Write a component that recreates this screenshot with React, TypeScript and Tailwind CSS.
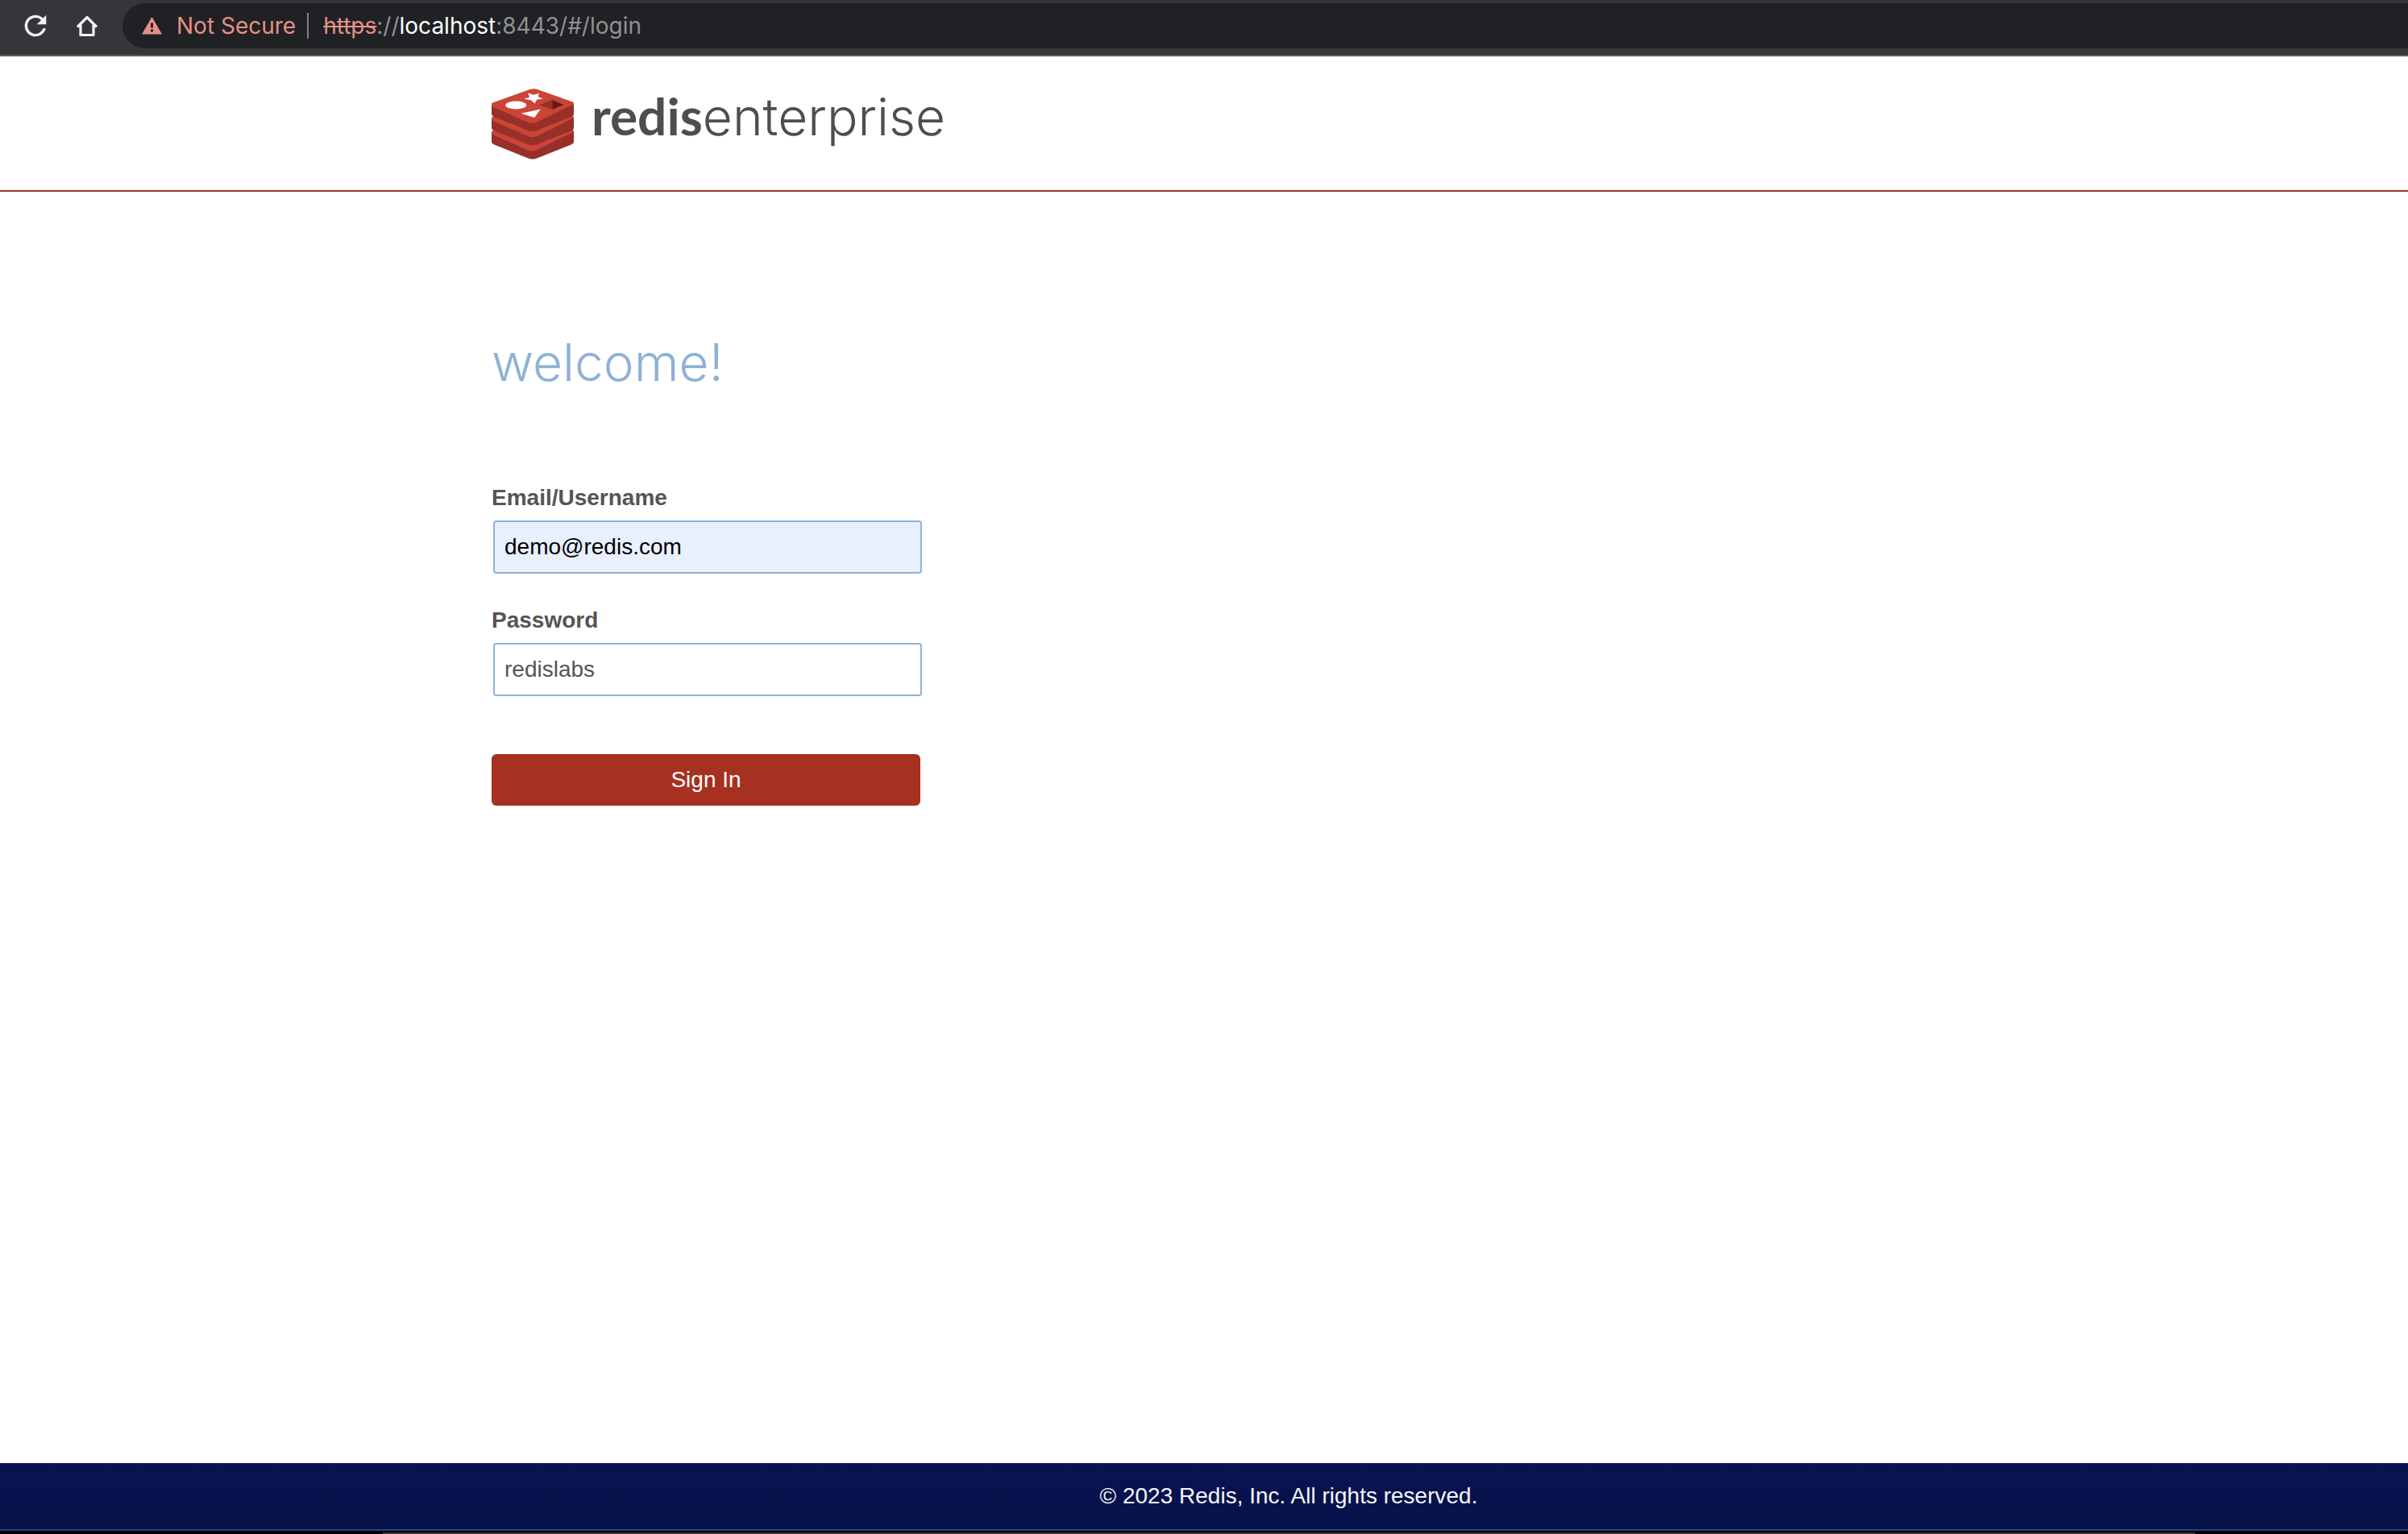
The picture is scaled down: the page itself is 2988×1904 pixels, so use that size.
import React from 'react';

function ReloadIcon() {
  return (
    <svg viewBox="0 0 24 24" className="size-10" fill="#f1f3f4" aria-hidden="true">
      <path d="M17.65 6.35A7.96 7.96 0 0 0 12 4a8 8 0 1 0 7.73 10h-2.08A6 6 0 1 1 12 6c1.66 0 3.14.69 4.22 1.78L13 11h7V4l-2.35 2.35z" />
    </svg>
  );
}

function HomeIcon() {
  return (
    <svg viewBox="0 0 40 40" className="size-10" aria-hidden="true">
      <path
        d="M8 21.500 20 9.500l12 12M12 19v12.500h16V19"
        fill="none"
        stroke="#f1f3f4"
        strokeWidth="3.200"
        strokeLinejoin="round"
      />
    </svg>
  );
}

function WarningIcon() {
  return (
    <svg viewBox="0 0 25 22" className="h-[22px] w-[25px]" aria-hidden="true">
      <path d="M12.500 0 25 21.500H0z" fill="#e69086" />
      <path d="M11 7.500h3v6h-3zM11 15.500h3v3h-3z" fill="#202124" />
    </svg>
  );
}

const layers = [104, 52, 0];

function RedisCube() {
  return (
    <svg viewBox="30 60 307 264" className="h-[88px] w-[102px]" aria-hidden="true">
      {layers.map((y) => (
        <g key={y} transform={`translate(0 ${y})`}>
          <path
            d="M30 115V155Q30 160 38 164L165 215Q183 223 201 215L329 164Q337 160 337 155V115L183 140Z"
            fill="#963029"
          />
          <path
            d="M34 112 168 64Q187 57 206 64L333 109Q341 114 333 119L203 183Q184 193 165 185L34 127Q26 119 34 112Z"
            fill="#cb4437"
          />
        </g>
      ))}
      <ellipse cx="121" cy="121" rx="39" ry="15" fill="#fff" />
      <path d="M166 76 187 83 208 77 203 90 222 97 199 101 191 115 178 103 151 98 172 91Z" fill="#fff" />
      <path d="M140 152 213 136 190 168Z" fill="#fff" />
      <path d="M208 121 257 102V138Z" fill="#963029" />
      <path d="M257 102 299 120 257 138Z" fill="#621b16" />
    </svg>
  );
}

function BrowserBar() {
  return (
    <div className="flex h-[70px] items-start border-b-2 border-[#5d5e61] bg-[#35363a] pt-1 pl-6 font-[Inter,sans-serif] text-[28px]">
      <div className="flex h-14 items-center gap-6">
        <button aria-label="Reload" className="block"><ReloadIcon /></button>
        <button aria-label="Home" className="block"><HomeIcon /></button>
      </div>
      <div className="ml-6 flex h-14 flex-1 items-center rounded-l-full bg-[#202124] pl-6">
        <button className="flex items-center gap-[18px] text-[#e69086]">
          <WarningIcon />
          Not Secure
        </button>
        <span className="mr-[18px] ml-3.5 h-8 w-0.5 bg-[#808184]" />
        <span className="text-[#909193]">
          <span className="text-[#e69086] line-through">https</span>://
          <span className="text-white">localhost</span>:8443/#/login
        </span>
      </div>
    </div>
  );
}

function Field({ id, label, value, type, tone }: { id: string; label: string; value: string; type: string; tone: string }) {
  return (
    <div>
      <label htmlFor={id} className="block text-[28px] leading-8 font-bold text-[#555]">{label}</label>
      <input
        id={id}
        type={type}
        defaultValue={value}
        className={`mt-3 ml-0.5 block h-[66px] w-full rounded-sm border-2 border-[#8fb2d6] px-3 text-[28px] outline-none ${tone}`}
      />
    </div>
  );
}

export default function App() {
  return (
    <div className="flex min-h-screen flex-col bg-white font-['Liberation_Sans',Arial,sans-serif]">
      <BrowserBar />
      <header className="border-b-2 border-[#a63121] pt-10 pb-[38px] pl-[610px]">
        <a href="#/login" className="flex h-[88px] w-fit gap-[22px] text-[#4d4e50]">
          <RedisCube />
          <span className="font-[Inter,sans-serif] text-[64px] leading-[68px] font-light">
            <span className="font-[Lato,sans-serif] font-bold">redis</span>enterprise
          </span>
        </a>
      </header>
      <main className="flex-1 pl-[610px]">
        <h1 className="pt-[172px] font-[Inter,sans-serif] text-[64px] leading-20 font-light text-[#8fb2d6]">welcome!</h1>
        <form className="mt-[112px] w-[532px]" onSubmit={(e) => e.preventDefault()}>
          <div className="flex flex-col gap-[42px]">
            <Field id="email" label="Email/Username" value="demo@redis.com" type="text" tone="bg-[#e8f0fe] text-black" />
            <Field id="password" label="Password" value="redislabs" type="text" tone="bg-white text-[#555]" />
          </div>
          <button type="submit" className="mt-18 block h-16 w-full rounded-md bg-[#a63121] text-[28px] text-white">Sign In</button>
        </form>
      </main>
      <footer>
        <div className="flex h-[84px] items-center justify-center border-b-2 border-[#343f6e] bg-[#081351] bg-linear-to-b from-[#081351] to-[#07124a] pl-[210px] text-[28px] text-[#f5f5f5]">
          © 2023 Redis, Inc. All rights reserved.
        </div>
        <div className="h-1 bg-black pt-0.5 pr-[264px] pl-[475px]">
          <div className="h-0.5 bg-[#3a3534]" />
        </div>
      </footer>
    </div>
  );
}
